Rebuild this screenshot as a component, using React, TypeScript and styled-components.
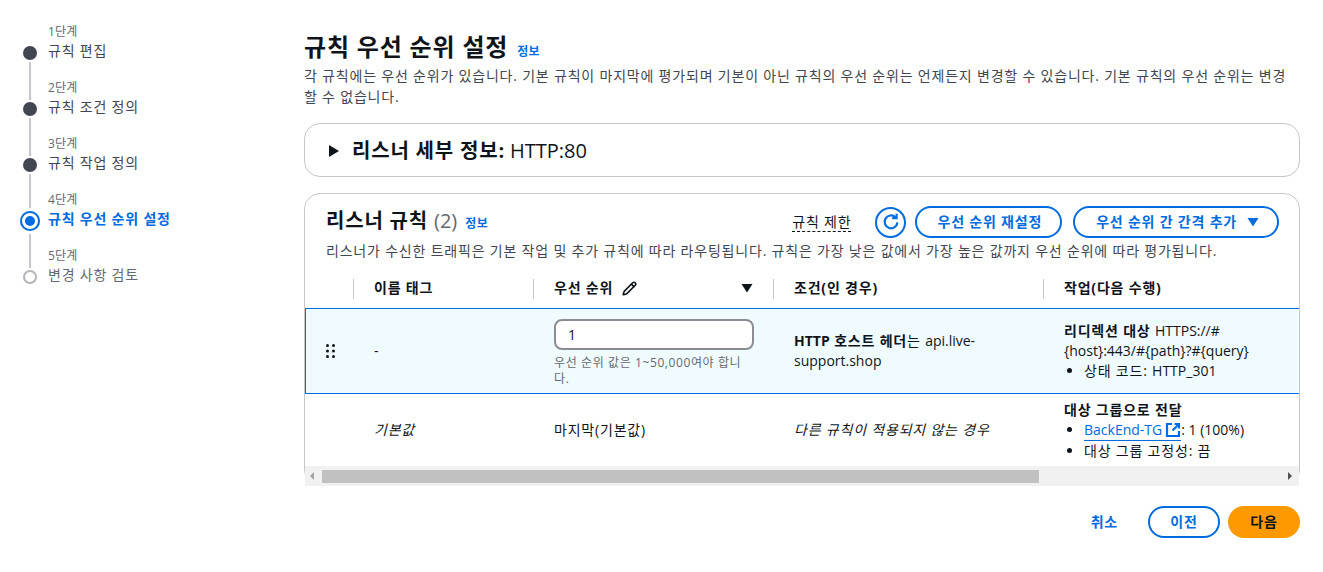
import React from 'react'
import styled, { createGlobalStyle } from 'styled-components'
import { Pencil } from 'lucide-react'

const GlobalStyle = createGlobalStyle`
  html, body {
    margin: 0;
    padding: 0;
    background: #fff;
    font-family: "Open Sans", "Noto Sans CJK KR", sans-serif;
    font-size: 14px;
    line-height: 20px;
    letter-spacing: 0.8px;
    color: #0f141a;
  }
  button, input { letter-spacing: inherit; }
  * { box-sizing: border-box; }
`

const steps = [
  { no: '1단계', label: '규칙 편집', state: 'done' },
  { no: '2단계', label: '규칙 조건 정의', state: 'done' },
  { no: '3단계', label: '규칙 작업 정의', state: 'done' },
  { no: '4단계', label: '규칙 우선 순위 설정', state: 'current' },
  { no: '5단계', label: '변경 사항 검토', state: 'todo' },
]

const CaretDown = ({ size = 12 }: { size?: number }) => (
  <svg width={size} height={size} viewBox="0 0 12 12" aria-hidden="true">
    <path d="M0.5 2h11L6 10.5z" fill="currentColor" />
  </svg>
)

const CaretRight = () => (
  <svg width="12" height="14" viewBox="0 0 12 14" aria-hidden="true">
    <path d="M1 1v12l10-6z" fill="currentColor" />
  </svg>
)

const RefreshIcon = () => (
  <svg width="18" height="18" viewBox="0 0 18 18" fill="none" stroke="currentColor" strokeWidth="2.2" aria-hidden="true">
    <path d="M15.4 9.4a6.4 6.4 0 1 1-2-5.2" />
    <path d="M14.6 0.8v4.4h-4.4" />
  </svg>
)

const ExternalIcon = () => (
  <svg width="16" height="16" viewBox="0 0 16 16" fill="none" stroke="currentColor" strokeWidth="2.2" aria-hidden="true">
    <path d="M7 2H2v12h12V9" />
    <path d="M7.5 8.5L14 2" />
    <path d="M9.5 2H14v4.5" />
  </svg>
)

const GripIcon = () => (
  <svg width="9" height="14" viewBox="0 0 9 14" fill="currentColor" aria-hidden="true">
    <circle cx="1.5" cy="1.5" r="1.5" />
    <circle cx="7.5" cy="1.5" r="1.5" />
    <circle cx="1.5" cy="7" r="1.5" />
    <circle cx="7.5" cy="7" r="1.5" />
    <circle cx="1.5" cy="12.5" r="1.5" />
    <circle cx="7.5" cy="12.5" r="1.5" />
  </svg>
)

const App: React.FC = () => {
  return (
    <Page>
      <GlobalStyle />
      <Sidebar>
        {steps.map((s, i) => (
          <Step key={s.no}>
            <Marker>
              <Connector
                $hidden={i === 0}
                $beforeCurrent={s.state === 'current'}
                $afterCurrent={i > 0 && steps[i - 1].state === 'current'}
              />
              <Dot $state={s.state} />
            </Marker>
            <StepText>
              <StepNo>{s.no}</StepNo>
              <StepLabel $state={s.state}>{s.label}</StepLabel>
            </StepText>
          </Step>
        ))}
      </Sidebar>
      <Main>
        <TitleRow>
          <Title>규칙 우선 순위 설정</Title>
          <InfoLink>정보</InfoLink>
        </TitleRow>
        <Description>
          각 규칙에는 우선 순위가 있습니다. 기본 규칙이 마지막에 평가되며 기본이 아닌 규칙의 우선 순위는 언제든지 변경할 수 있습니다. 기본 규칙의 우선 순위는 변경할 수 없습니다.
        </Description>

        <DetailCard>
          <CaretRight />
          <DetailTitle>리스너 세부 정보:</DetailTitle>
          <DetailValue>HTTP:80</DetailValue>
        </DetailCard>

        <RulesCard>
          <RulesHeader>
            <RulesHeading>
              <RulesTitle>리스너 규칙</RulesTitle>
              <RulesCount>(2)</RulesCount>
              <InfoLink>정보</InfoLink>
            </RulesHeading>
            <RulesActions>
              <LimitLink>규칙 제한</LimitLink>
              <IconButton><RefreshIcon /></IconButton>
              <OutlineButton>우선 순위 재설정</OutlineButton>
              <OutlineButton $menu>
                우선 순위 간 간격 추가
                <CaretDown />
              </OutlineButton>
            </RulesActions>
          </RulesHeader>
          <RulesDescription>
            리스너가 수신한 트래픽은 기본 작업 및 추가 규칙에 따라 라우팅됩니다. 규칙은 가장 낮은 값에서 가장 높은 값까지 우선 순위에 따라 평가됩니다.
          </RulesDescription>

          <HeadRow>
            <HeadCell />
            <HeadCell $divider>이름 태그</HeadCell>
            <HeadCell $divider>
              <span>우선 순위</span>
              <Pencil size={15} strokeWidth={2.6} />
              <SortCaret><CaretDown /></SortCaret>
            </HeadCell>
            <HeadCell $divider>조건(인 경우)</HeadCell>
            <HeadCell $divider>작업(다음 수행)</HeadCell>
          </HeadRow>

          <SelectedRow>
            <GripCell><GripIcon /></GripCell>
            <Cell>-</Cell>
            <PriorityCell>
              <PriorityInput defaultValue="1" />
              <Hint>우선 순위 값은 1~50,000여야 합니다.</Hint>
            </PriorityCell>
            <Cell><b><Latin>HTTP</Latin> 호스트 헤더</b>는 <Latin>api.live-</Latin><Latin>support.shop</Latin></Cell>
            <ActionCell>
              <b>리디렉션 대상</b> <Latin>HTTPS://#</Latin><Latin>{'{'}host{'}'}:443/#{'{'}path{'}'}?#{'{'}query{'}'}</Latin>
              <Bullets>
                <li>상태 코드: <Latin>HTTP_301</Latin></li>
              </Bullets>
            </ActionCell>
          </SelectedRow>

          <DefaultRow>
            <Cell />
            <Cell><em>기본값</em></Cell>
            <Cell>마지막(기본값)</Cell>
            <Cell><em>다른 규칙이 적용되지 않는 경우</em></Cell>
            <ActionCell>
              <b>대상 그룹으로 전달</b>
              <Bullets>
                <li><TargetLink><Latin>BackEnd-TG</Latin> <ExternalIcon /></TargetLink><Latin>: 1 (100%)</Latin></li>
                <li>대상 그룹 고정성: 끔</li>
              </Bullets>
            </ActionCell>
          </DefaultRow>

          <ScrollTrack>
            <ScrollArrow $dir="left" />
            <ScrollThumb />
            <ScrollArrow $dir="right" />
          </ScrollTrack>
        </RulesCard>

        <Footer>
          <CancelLink>취소</CancelLink>
          <FooterButton>이전</FooterButton>
          <PrimaryButton>다음</PrimaryButton>
        </Footer>
      </Main>
    </Page>
  )
}

const Latin = styled.span`
  letter-spacing: 0;
`
const Page = styled.div`
  display: flex;
  width: 1323px;
  height: 572px;
  overflow: hidden;
`
const Sidebar = styled.nav`
  width: 304px;
  flex: none;
  padding: 4px 0 0 20px;
`
const Step = styled.div`
  display: flex;
  height: 56px;
`
const Marker = styled.div`
  width: 20px;
  display: flex;
  flex-direction: column;
  align-items: center;
`
const Connector = styled.div<{ $hidden?: boolean; $beforeCurrent?: boolean; $afterCurrent?: boolean }>`
  flex: 1;
  width: 2px;
  background: ${(p) => (p.$hidden ? 'transparent' : '#c6c6cd')};
  margin-top: ${(p) => (p.$afterCurrent ? 6 : 2)}px;
  margin-bottom: ${(p) => (p.$beforeCurrent ? 6 : 2)}px;
`
const Dot = styled.div<{ $state: string }>`
  flex: none;
  width: ${(p) => (p.$state === 'current' ? 20 : 14)}px;
  height: ${(p) => (p.$state === 'current' ? 20 : 14)}px;
  margin: ${(p) => (p.$state === 'current' ? '-3px 0' : '0')};
  border-radius: 50%;
  background: ${(p) =>
    p.$state === 'done' ? '#424650' : p.$state === 'current' ? '#006ce0' : '#fff'};
  border: ${(p) => (p.$state === 'todo' ? '2px solid #b4b4bb' : 'none')};
  box-shadow: ${(p) => (p.$state === 'current' ? 'inset 0 0 0 2px #006ce0, inset 0 0 0 5px #fff' : 'none')};
`
const StepText = styled.div`
  align-self: flex-end;
  margin-left: 8px;
  margin-bottom: -1px;
`
const StepNo = styled.div`
  font-size: 12px;
  line-height: 16px;
  letter-spacing: 0.2px;
  color: #656871;
  margin-bottom: 1px;
`
const StepLabel = styled.div<{ $state: string }>`
  font-size: 14px;
  line-height: 20px;
  white-space: nowrap;
  font-weight: ${(p) => (p.$state === 'current' ? 700 : 400)};
  color: ${(p) => (p.$state === 'current' ? '#006ce0' : p.$state === 'todo' ? '#656871' : '#424650')};
`
const Main = styled.main`
  flex: 1;
  min-width: 0;
  padding: 30px 23px 0 0;
`
const TitleRow = styled.div`
  display: flex;
  align-items: baseline;
  gap: 9px;
`
const Title = styled.h1`
  margin: 0;
  font-size: 24px;
  line-height: 34px;
  font-weight: 700;
  color: #0f141a;
`
const InfoLink = styled.a`
  font-size: 12px;
  line-height: 16px;
  font-weight: 700;
  letter-spacing: 0.4px;
  color: #006ce0;
`
const Description = styled.p`
  margin: 1px 0 0;
  padding-right: 10px;
  font-size: 14px;
  line-height: 21px;
  color: #424650;
`
const DetailCard = styled.section`
  display: flex;
  align-items: center;
  height: 54px;
  margin-top: 16px;
  padding: 2px 0 0 23px;
  border: 1px solid #c6c6cd;
  border-radius: 16px;
`
const DetailTitle = styled.span`
  margin-left: 12px;
  font-size: 20px;
  line-height: 28px;
  font-weight: 700;
`
const DetailValue = styled.span`
  margin-left: 5px;
  font-size: 20px;
  line-height: 28px;
  letter-spacing: 0;
`
const RulesCard = styled.section`
  margin-top: 16px;
  height: 293px;
  border: 1px solid #c6c6cd;
  border-radius: 16px;
`
const RulesHeader = styled.div`
  display: flex;
  align-items: center;
  justify-content: space-between;
  padding: 11px 20px 0 21px;
  height: 43px;
`
const RulesHeading = styled.div`
  display: flex;
  align-items: baseline;
  gap: 6px;
`
const RulesTitle = styled.h2`
  margin: 0;
  font-size: 20px;
  line-height: 28px;
  font-weight: 700;
`
const RulesCount = styled.span`
  font-size: 20px;
  letter-spacing: 0;
  color: #656871;
  margin-right: 2px;
`
const RulesActions = styled.div`
  display: flex;
  align-items: center;
  margin-top: 2px;
`
const LimitLink = styled.span`
  margin-right: 24px;
  line-height: 18px;
  color: #0f141a;
  border-bottom: 1px dashed #0f141a;
`
const IconButton = styled.button`
  display: flex;
  align-items: center;
  justify-content: center;
  width: 31px;
  height: 31px;
  padding: 0;
  margin-right: 9px;
  border: 2px solid #006ce0;
  border-radius: 50%;
  background: #fff;
  color: #006ce0;
`
const OutlineButton = styled.button<{ $menu?: boolean }>`
  display: flex;
  align-items: center;
  gap: 10px;
  height: 32px;
  padding: 0 18px 0 ${(p) => (p.$menu ? 21 : 20)}px;
  margin-right: 11px;
  border: 2px solid #006ce0;
  border-radius: 20px;
  background: #fff;
  color: #006ce0;
  font: inherit;
  font-weight: 700;
  white-space: nowrap;
  &:last-child { margin-right: 0; }
`
const RulesDescription = styled.p`
  margin: 4px 0 0;
  padding-left: 21px;
  font-size: 14px;
  line-height: 20px;
  color: #424650;
`
const columns = '48px 180px 240px 270px 1fr'

const HeadRow = styled.div`
  display: grid;
  grid-template-columns: ${columns};
  height: 41px;
  margin-top: 6px;
  padding-top: 10px;
`
const HeadCell = styled.div<{ $divider?: boolean }>`
  display: flex;
  align-items: center;
  gap: 9px;
  height: 20px;
  margin-top: 2px;
  padding: 0 20px 2px;
  font-weight: 700;
  color: #0f141a;
  border-left: ${(p) => (p.$divider ? '1px solid #c6c6cd' : 'none')};
`
const SortCaret = styled.span`
  display: flex;
  margin-left: auto;
`
const SelectedRow = styled.div`
  display: grid;
  grid-template-columns: ${columns};
  height: 86px;
  background: #f0fbff;
  border: 1px solid #006ce0;
  border-right: none;
  align-items: center;
`
const DefaultRow = styled.div`
  display: grid;
  grid-template-columns: ${columns};
  height: 72px;
  padding-left: 1px;
  align-items: center;
`
const Cell = styled.div`
  padding: 0 20px;
  font-size: 14px;
  line-height: 20px;
  color: #0f141a;
`
const GripCell = styled.div`
  display: flex;
  padding-left: 20px;
  color: #0f141a;
`
const PriorityCell = styled.div`
  padding: 3px 20px 0;
`
const PriorityInput = styled.input`
  display: block;
  width: 100%;
  height: 31px;
  padding: 0 12px;
  border: 2px solid #8c8c94;
  border-radius: 8px;
  background: #fff;
  font: inherit;
  color: #0f141a;
`
const Hint = styled.div`
  max-width: 190px;
  margin-top: 5px;
  font-size: 12px;
  line-height: 16px;
  letter-spacing: 0.6px;
  color: #656871;
`
const ActionCell = styled.div`
  padding: 0 20px;
  font-size: 14px;
  line-height: 20px;
  color: #0f141a;
`
const Bullets = styled.ul`
  margin: 0;
  padding-left: 20px;
`
const TargetLink = styled.a`
  color: #006ce0;
  display: inline-flex;
  align-items: center;
  border-bottom: 1px solid #006ce0;
  line-height: 20px;
  svg { margin-left: 3px; }
`
const ScrollTrack = styled.div`
  display: flex;
  align-items: center;
  height: 20px;
  background: #f1f1f1;
`
const ScrollArrow = styled.div<{ $dir: 'left' | 'right' }>`
  width: 0;
  height: 0;
  margin: ${(p) => (p.$dir === 'left' ? '0 8px 0 5px' : '0 7px 0 auto')};
  border-top: 4px solid transparent;
  border-bottom: 4px solid transparent;
  border-left: ${(p) => (p.$dir === 'right' ? '4px solid #505050' : 'none')};
  border-right: ${(p) => (p.$dir === 'left' ? '4px solid #a3a3a3' : 'none')};
`
const ScrollThumb = styled.div`
  width: 717px;
  height: 13px;
  background: #c1c1c1;
`
const Footer = styled.div`
  display: flex;
  align-items: center;
  justify-content: flex-end;
  margin-top: 20px;
`
const CancelLink = styled.a`
  margin-right: 30px;
  font-weight: 700;
  color: #006ce0;
`
const FooterButton = styled.button`
  width: 72px;
  height: 32px;
  margin-right: 8px;
  border: 2px solid #006ce0;
  border-radius: 20px;
  background: #fff;
  color: #006ce0;
  font: inherit;
  font-weight: 700;
`
const PrimaryButton = styled.button`
  width: 72px;
  height: 32px;
  border: none;
  border-radius: 20px;
  background: #ff9900;
  color: #0f141a;
  font: inherit;
  font-weight: 700;
`

export default App
